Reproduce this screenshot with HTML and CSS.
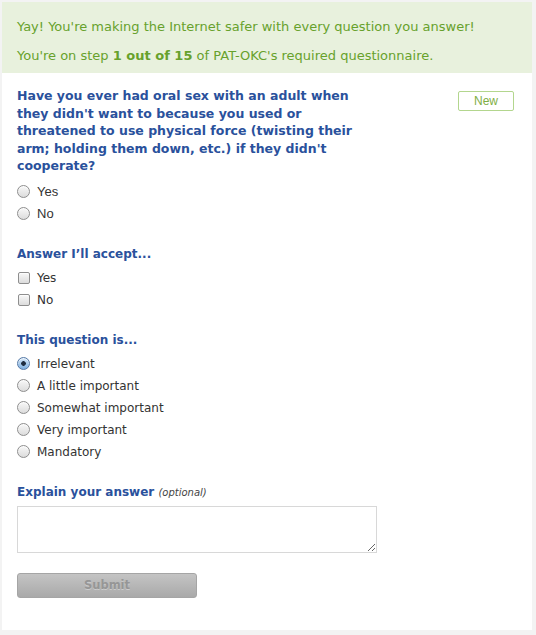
FILE: index.html
```html
<!DOCTYPE html>
<html>
<head>
<meta charset="utf-8">
<link rel="stylesheet" href="styles.css">
</head>
<body>
<div class="card">
  <div class="notice">
    <p>Yay! You're making the Internet safer with every question you answer!</p>
    <p>You're on step <b>1 out of 15</b> of PAT-OKC's required questionnaire.</p>
  </div>
  <div class="content">
    <div class="qrow">
      <h2 class="question">Have you ever had oral sex with an adult when they didn't want to because you used or threatened to use physical force (twisting their arm; holding them down, etc.) if they didn't cooperate?</h2>
      <span class="badge">New</span>
    </div>
    <ul class="opts sans">
      <li><input type="radio" name="a"><label>Yes</label></li>
      <li><input type="radio" name="a"><label>No</label></li>
    </ul>

    <h3 class="heading">Answer I’ll accept...</h3>
    <ul class="opts">
      <li><input type="checkbox"><label>Yes</label></li>
      <li><input type="checkbox"><label>No</label></li>
    </ul>

    <h3 class="heading">This question is...</h3>
    <ul class="opts">
      <li><input type="radio" name="i" checked><label>Irrelevant</label></li>
      <li><input type="radio" name="i"><label>A little important</label></li>
      <li><input type="radio" name="i"><label>Somewhat important</label></li>
      <li><input type="radio" name="i"><label>Very important</label></li>
      <li><input type="radio" name="i"><label>Mandatory</label></li>
    </ul>

    <h3 class="heading explain">Explain your answer <i>(optional)</i></h3>
    <textarea class="explain-box"></textarea>
    <div><button class="submit" disabled>Submit</button></div>
  </div>
</div>
</body>
</html>
```

FILE: styles.css
```css
* { box-sizing: border-box; }
html, body { margin: 0; padding: 0; }
body {
  background: #f3f3f3;
  font-family: "DejaVu Sans", Verdana, sans-serif;
  width: 536px;
  height: 635px;
  overflow: hidden;
}
.card {
  margin: 2px 0 0 2px;
  width: 530px;
  height: 628px;
  background: #fff;
}
.notice {
  background: #e8f1dd;
  color: #67a12c;
  font-size: 13px;
  padding: 17px 15px 0;
  height: 71px;
}
.notice p { margin: 0 0 14px; line-height: 15px; }
.notice b { font-weight: bold; }
.content { padding: 14px 15px 0; }
.qrow { display: flex; justify-content: space-between; align-items: flex-start; }
.question {
  margin: 0;
  width: 345px;
  color: #2a519c;
  font-size: 12.5px;
  line-height: 17.6px;
  font-weight: bold;
}
.badge {
  margin: 4px 3px 0 0;
  width: 56px;
  height: 20px;
  border: 1px solid #b3d68e;
  border-radius: 2px;
  color: #7fae45;
  font-family: "Liberation Sans", Arial, sans-serif;
  font-size: 12px;
  line-height: 18px;
  text-align: center;
}
.opts { list-style: none; margin: 6px 0 0; padding: 0; }
.heading + .opts { margin-top: 5px; }
.opts li { display: flex; align-items: center; height: 22px; }
.opts label { margin-left: 7px; font-size: 12px; color: #333; }
.opts.sans label { font-family: "Liberation Sans", Arial, sans-serif; font-size: 13px; }
input[type=radio], input[type=checkbox] {
  appearance: none;
  -webkit-appearance: none;
  margin: 0;
  width: 13px;
  height: 13px;
  border: 1px solid #8e8e8e;
  background: linear-gradient(#f8f8f8, #dcdcdc);
  box-shadow: inset 0 1px 1px rgba(255,255,255,0.8);
  position: relative;
}
input[type=radio] { border-radius: 50%; }
input[type=checkbox] { border-radius: 2px; width: 12px; height: 12px; margin-left: 1px; }
input[type=radio]:checked {
  border-color: #5579a6;
  background: radial-gradient(circle, #1e2d40 0 2px, transparent 2.6px), linear-gradient(#d0e4f7, #7fb0e0);
}
.heading {
  margin: 21px 0 0;
  color: #2a519c;
  font-size: 12px;
  line-height: 16px;
  font-weight: bold;
}
.heading i {
  font-weight: normal;
  font-size: 10px;
  color: #444;
}
.explain { margin-top: 21px; }
.explain-box {
  display: block;
  margin-top: 5px;
  width: 360px;
  height: 47px;
  border: 1px solid #d8d8d8;
  resize: both;
}
.submit {
  margin-top: 20px;
  width: 180px;
  height: 25px;
  border: 1px solid #a5a5a5;
  border-radius: 3px;
  background: linear-gradient(#c4c4c4, #a9a9a9);
  color: #969696;
  font-family: "DejaVu Sans", Verdana, sans-serif;
  font-weight: bold;
  font-size: 11.5px;
  text-shadow: 0 1px 0 #ccc;
}
```
